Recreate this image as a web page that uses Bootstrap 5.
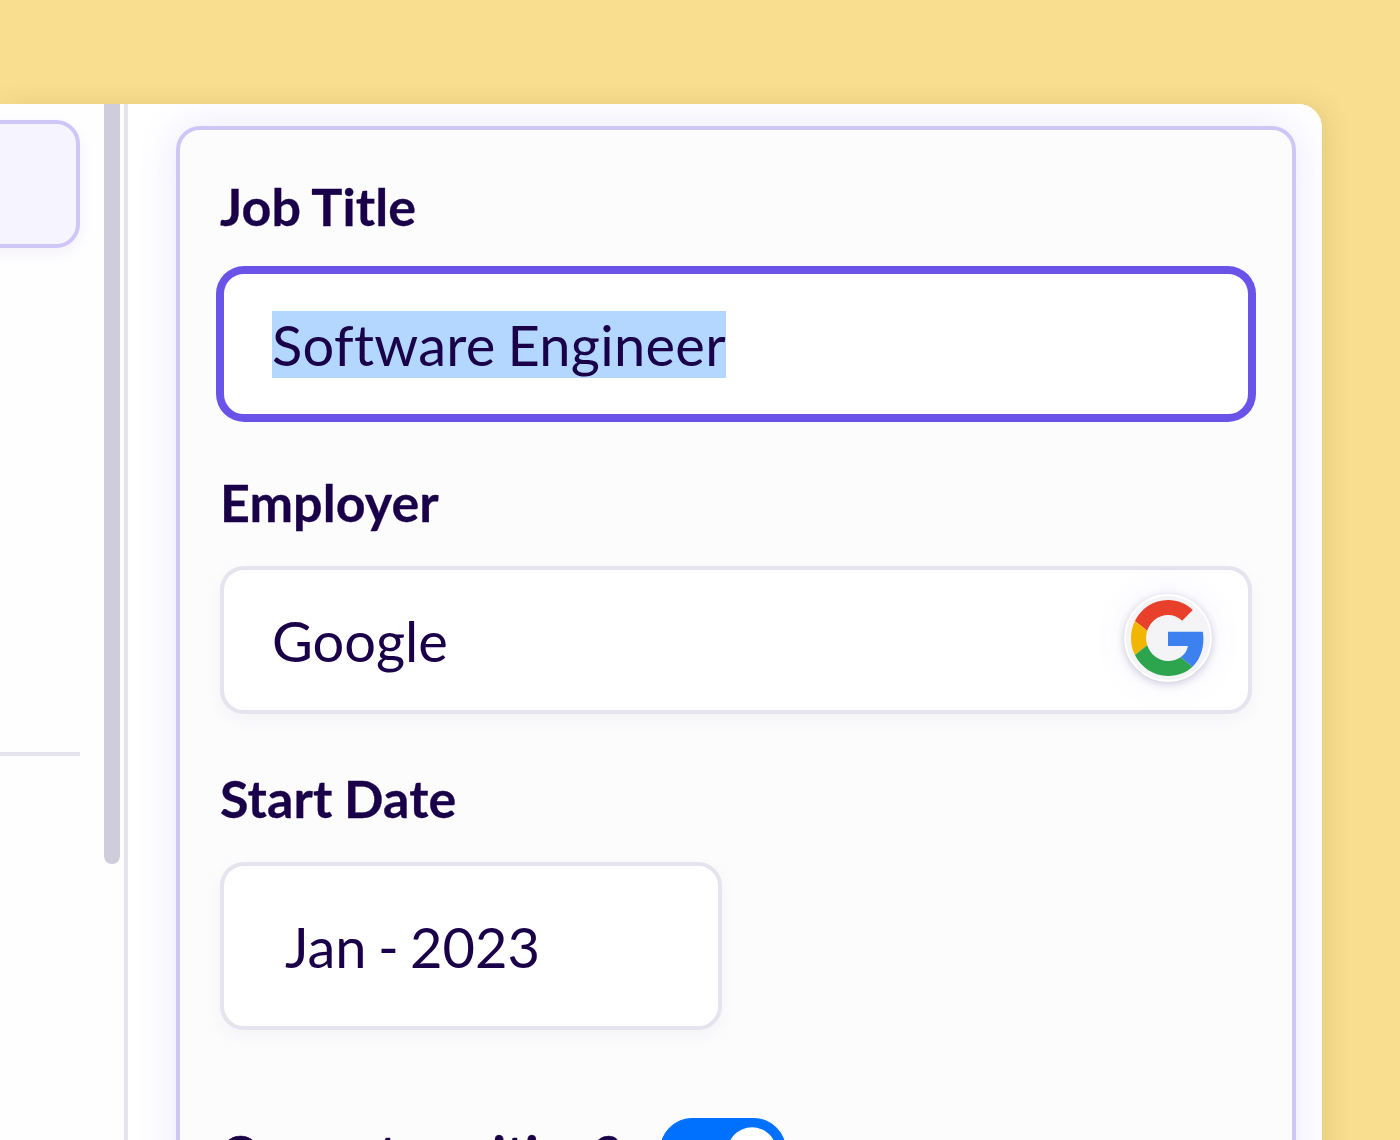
<!DOCTYPE html>
<html lang="en">
<head>
<meta charset="utf-8">
<title>Job form</title>
<link href="https://cdn.jsdelivr.net/npm/bootstrap@5.3.0/dist/css/bootstrap.min.css" rel="stylesheet">
<style>
html,body{height:1140px;overflow:hidden}
body{background:#f9de90;font-family:"Lato",sans-serif;color:#1a0048}
.shell{margin-top:104px;width:1322px;height:1100px;background:#fff;border-top-right-radius:24px;overflow:hidden}
.shell-wrap{width:1322px;border-top-right-radius:24px;box-shadow:6px 0 24px rgba(120,90,20,.14)}
.side-pane{width:128px;flex:none;border-right:4px solid #e4e3ee;background:#fefdff}
.side-sel{width:120px;height:128px;margin:16px 0 0 -40px;background:#f6f4ff;border:4px solid #cfc6f8;border-radius:24px;box-shadow:0 6px 16px rgba(31,10,79,.05)}
.side-rule{width:80px;height:4px;margin-top:504px;background:#e4e3ee}
.side-scroll{left:104px;top:0;width:16px;height:760px;background:#cfccdb;border-radius:0 0 8px 8px}
.main-pane{padding:22px 0 0 48px;background:#fff}
.form-panel{width:1120px;height:1100px;padding:44px 40px 0;background:#fcfcfd;border:4px solid #cfc6f8;border-radius:24px;box-shadow:0 0 40px rgba(108,86,234,.14)}
.field-label{display:block;padding-top:1px;font-size:52px;line-height:62px;font-weight:700;letter-spacing:.1px;word-spacing:-1px;-webkit-text-stroke:.3px #1a0048;color:#1a0048;margin-bottom:33px}
.field-block{margin-bottom:52px}
.form-control.field-input{height:148px;padding:0 48px;font-family:"Lato",sans-serif;font-size:56px;line-height:67px;color:#1a0048;background:#fff;border:4px solid #e4e3ee;border-radius:24px;box-shadow:0 6px 18px rgba(31,10,79,.04)}
.form-control.field-input:focus,.form-control.field-input.is-active{border-color:#6a53e8;box-shadow:0 0 0 4px #6a53e8;outline:0}
.field-input::selection{background:#b4d7ff;color:#1a0048}
.form-control.job-input{letter-spacing:.3px;word-spacing:-3px}
.form-control.date-input{width:502px;height:168px;padding-left:61px;word-spacing:-3px}
.brand-badge{right:40px;top:28px;width:88px;height:88px;background:#f4f4f6;border:2px solid #fff;border-radius:50%;box-shadow:0 2px 8px rgba(31,10,79,.2),0 0 36px rgba(108,86,234,.08)}
.brand-badge svg{width:74px;height:76px}
.switch-row{margin-top:88px}
.switch-row .field-label{margin:0 39px 0 0}
.form-switch .form-check-input.big-switch{width:126px;height:68px;margin:0;float:none;background-color:#0071ff;border-color:#0071ff;box-shadow:none}
.form-switch.switch-box{padding:0;min-height:0;margin:0}
</style>
</head>
<body>
<div class="shell-wrap mt-0">
<div class="shell d-flex">
  <aside class="side-pane position-relative overflow-hidden">
    <div class="side-sel"></div>
    <div class="side-rule"></div>
    <div class="side-scroll position-absolute"></div>
  </aside>
  <main class="main-pane flex-grow-1">
    <form class="form-panel">
      <div class="field-block">
        <label class="field-label" for="job">Job Title</label>
        <input id="job" class="form-control field-input job-input is-active" type="text" value="Software Engineer">
      </div>
      <div class="field-block">
        <label class="field-label" for="employer">Employer</label>
        <div class="position-relative">
          <input id="employer" class="form-control field-input" type="text" value="Google">
          <span class="brand-badge position-absolute d-flex align-items-center justify-content-center">
            <svg viewBox="0 0 48 48" preserveAspectRatio="none" aria-hidden="true">
              <path fill="#E8402B" d="M24 9.5c3.54 0 6.71 1.22 9.21 3.6l6.85-6.85C35.9 2.38 30.47 0 24 0 14.62 0 6.51 5.38 2.56 13.22l7.98 6.19C12.43 13.72 17.74 9.5 24 9.5z"/>
              <path fill="#3D80F0" d="M46.98 24.55c0-1.57-.15-3.09-.38-4.55H24v9.02h12.94c-.58 2.96-2.26 5.48-4.78 7.18l7.73 6c4.51-4.18 7.09-10.36 7.09-17.65z"/>
              <path fill="#F2B500" d="M10.53 28.59c-.48-1.45-.76-2.99-.76-4.59s.27-3.14.76-4.59l-7.98-6.19C.92 16.46 0 20.12 0 24c0 3.88.92 7.54 2.56 10.78l7.97-6.19z"/>
              <path fill="#2DA44E" d="M24 48c6.48 0 11.93-2.13 15.89-5.81l-7.73-6c-2.15 1.45-4.92 2.3-8.16 2.3-6.26 0-11.57-4.22-13.47-9.91l-7.98 6.19C6.51 42.62 14.62 48 24 48z"/>
            </svg>
          </span>
        </div>
      </div>
      <div>
        <label class="field-label" for="start">Start Date</label>
        <input id="start" class="form-control field-input date-input" type="text" value="Jan - 2023">
      </div>
      <div class="switch-row d-flex align-items-center">
        <label class="field-label" for="current">Current position?</label>
        <div class="form-check form-switch switch-box">
          <input id="current" class="form-check-input big-switch" type="checkbox" role="switch" checked>
        </div>
      </div>
    </form>
  </main>
</div>
</div>
<script src="https://cdn.jsdelivr.net/npm/bootstrap@5.3.0/dist/js/bootstrap.bundle.min.js"></script>
<script>
var j=document.getElementById('job');j.focus();j.select();
</script>
</body>
</html>
